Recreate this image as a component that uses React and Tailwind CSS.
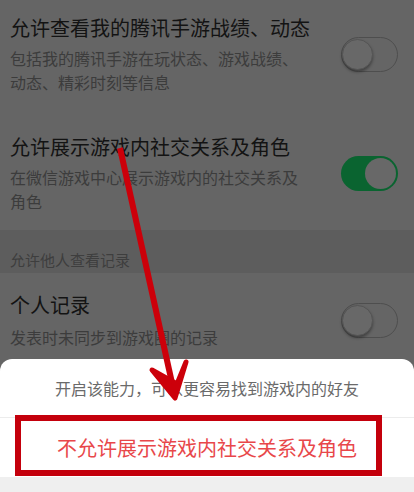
import React from 'react';

const Toggle = ({ on }) => (
    <div
        className={`w-[57px] h-[35px] rounded-full flex items-center shrink-0 ${
            on ? 'bg-[#0a6430] justify-end pr-[2px]' : 'border border-[#4e4e4e] justify-start'
        }`}
    >
        <div
            className={`w-[31px] h-[31px] rounded-full bg-[#686868] ${
                on ? '' : 'shadow-[0_2px_3px_rgba(0,0,0,0.35)] border border-[#555]'
            }`}
        />
    </div>
);

const Item = ({ title, lines, on, className = '', subClass = 'mt-[4px]' }) => (
    <div className={`flex items-center justify-between pl-[10px] pr-[16px] ${className}`}>
        <div className="flex flex-col">
            <div className="text-[20px] leading-[28px] text-[#131313]">{title}</div>
            <div className={`text-[16px] leading-[24px] text-[#3c3c3c] ${subClass}`}>
                {lines.map((l) => (
                    <div key={l}>{l}</div>
                ))}
            </div>
        </div>
        <Toggle on={on} />
    </div>
);

export default function App() {
    return (
        <div
            className="relative w-[414px] h-[492px] overflow-hidden bg-[#656565] flex flex-col"
            style={{ fontFamily: '"Noto Sans CJK SC", "Noto Sans", sans-serif' }}
        >
            {/* ---------- LIST ---------- */}
            <Item
                className="pt-[14px]"
                title="允许查看我的腾讯手游战绩、动态"
                lines={['包括我的腾讯手游在玩状态、游戏战绩、', '动态、精彩时刻等信息']}
                on={false}
            />
            <Item
                className="pt-[39px]"
                title="允许展示游戏内社交关系及角色"
                lines={['在微信游戏中心展示游戏内的社交关系及', '角色']}
                on
            />

            <div className="mt-[17px] h-[43px] bg-[#5d5d5d] flex items-end pb-[2px] pl-[10px] text-[15px] leading-[22px] text-[#3e3e3e]">
                允许他人查看记录
            </div>

            <Item
                className="pt-[18px]"
                subClass="mt-[6px]"
                title="个人记录"
                lines={['发表时未同步到游戏圈的记录']}
                on={false}
            />

            {/* ---------- SHEET ---------- */}
            <div className="absolute left-0 right-0 top-[359px] bottom-0 bg-white rounded-t-[12px] flex flex-col">
                <div className="h-[58px] flex items-center justify-center text-[16px] text-[#6a6a6a]">
                    开启该能力，可以更容易找到游戏内的好友
                </div>
                <div className="h-[60px] border-t border-[#ececec] flex items-center justify-center text-[20px] text-[#e8474a]">
                    不允许展示游戏内社交关系及角色
                </div>
                <div className="flex-1 bg-[#efefef]" />
            </div>

            {/* ---------- ANNOTATIONS ---------- */}
            <div className="absolute left-[15px] top-[415px] w-[367px] h-[61px] border-[6px] border-[#c4000c]" />
            <svg className="absolute inset-0" width="414" height="492" viewBox="0 0 414 492">
                <line x1="120" y1="148" x2="174" y2="392" stroke="#cc000a" strokeWidth="6" />
                <path d="M152 370 L175 398 L186 362 L177 384 Z" fill="#cc000a" stroke="#cc000a" strokeWidth="5" strokeLinejoin="round" />
            </svg>
        </div>
    );
}
